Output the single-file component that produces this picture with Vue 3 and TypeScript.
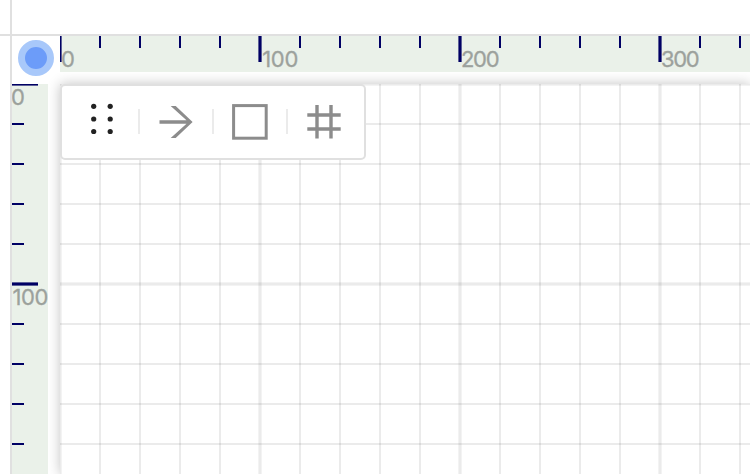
<script setup lang="ts">
const step = 40
const minorTicks = (length: number): number[] =>
  Array.from({ length: Math.ceil(length / step) }, (_, i) => i * step).filter((p) => p % 200 !== 0)
const majorTicks = (length: number): number[] =>
  Array.from({ length: Math.ceil(length / 200) }, (_, i) => i * 200)

const width = 690
const height = 390
</script>

<template>
  <div class="editor">
    <header class="header"></header>
    <aside class="side"></aside>
    <div class="corner"><span class="origin"></span></div>
    <svg class="ruler" :width="width" height="36">
      <rect v-for="x in minorTicks(width)" :key="x" :x="x - 1" y="0" width="2" height="12" class="tick" />
      <g v-for="x in majorTicks(width)" :key="'m' + x">
        <rect :x="x - 1.6" y="0" width="3.2" height="26" class="tick" />
        <text :x="x === 200 ? x + 2.2 : x + 1" y="31" class="label" :class="{ narrow: x === 200 }">{{ x / 2 }}</text>
      </g>
    </svg>
    <svg class="ruler vertical" width="36" :height="height">
      <rect v-for="y in minorTicks(height)" :key="y" x="0" :y="y - 1" width="12" height="2" class="tick" />
      <g v-for="y in majorTicks(height)" :key="'m' + y">
        <rect x="0" :y="y - 1.6" width="26" height="3.2" class="tick" />
        <text :x="y === 200 ? 0.4 : -1" :y="y + 21" class="label" :class="{ narrow: y === 200 }">{{ y / 2 }}</text>
      </g>
    </svg>
    <main class="canvas">
      <svg class="grid" :width="width" :height="height">
        <rect v-for="x in minorTicks(width)" :key="'x' + x" :x="x - 1" y="0" width="2" :height="height" class="line" />
        <rect v-for="x in majorTicks(width)" :key="'mx' + x" :x="x - 1.6" y="0" width="3.2" :height="height" class="line" />
        <rect v-for="y in minorTicks(height)" :key="'y' + y" x="0" :y="y - 1" :width="width" height="2" class="line" />
        <rect v-for="y in majorTicks(height)" :key="'my' + y" x="0" :y="y - 1.6" :width="width" height="3.2" class="line" />
      </svg>
      <nav class="toolbar">
        <svg class="tool" width="76" height="72" viewBox="0 0 76 72">
          <g v-for="y in [20.3, 33, 45.5]" :key="y" fill="#222">
            <circle cx="31.7" :cy="y" r="2.6" />
            <circle cx="48.2" :cy="y" r="2.6" />
          </g>
        </svg>
        <i class="divider"></i>
        <svg class="tool" width="72" height="72" viewBox="0 0 72 72">
          <path d="M19.5 34.3H46.5L30.7 20H35.7L52.6 36L35.7 52H30.7L46.5 37.7H19.5Z" fill="#8c8c8c" />
        </svg>
        <i class="divider"></i>
        <svg class="tool" width="72" height="72" viewBox="0 0 72 72">
          <rect x="19.6" y="19.6" width="32.6" height="32.6" fill="none" stroke="#8c8c8c" stroke-width="3" />
        </svg>
        <i class="divider"></i>
        <svg class="tool" width="76" height="72" viewBox="0 0 76 72">
          <path d="M29 19V52.5M43 19V52.5M19.3 29H52.7M19.3 43H52.7" stroke="#8c8c8c" stroke-width="3.4" />
        </svg>
      </nav>
    </main>
  </div>
</template>

<style>
body {
  overflow: hidden;
}
</style>

<style scoped>
.editor {
  display: grid;
  grid-template-columns: 12px 36px 12px 690px;
  grid-template-rows: 36px 36px 12px 390px;
  width: 750px;
  height: 474px;
  overflow: hidden;
  background: #fff;
  font-family: Inter, "Liberation Sans", sans-serif;
}
.header {
  grid-area: 1 / 1 / 2 / 5;
  border-bottom: 2px solid #e0e0e0;
}
.side {
  grid-area: 1 / 1 / 5 / 2;
  border-right: 2px solid #e0e0e0;
}
.corner {
  grid-area: 2 / 2 / 4 / 4;
  display: flex;
  align-items: flex-start;
  padding: 4px 0 0 6px;
}
.origin {
  box-sizing: border-box;
  width: 36px;
  height: 36px;
  border: 7px solid #a8c8fa;
  border-radius: 50%;
  background: #6c9cf9;
}
.ruler {
  grid-area: 2 / 4 / 3 / 5;
  display: block;
  overflow: hidden;
  background: #eaf1e9;
  z-index: 1;
}
.vertical {
  grid-area: 4 / 2 / 5 / 3;
}
.tick {
  fill: #000064;
}
.label {
  fill: #9ca19c;
  stroke: #9ca19c;
  stroke-width: 0.3px;
  font-size: 22px;
  letter-spacing: -1.3px;
}
.narrow {
  letter-spacing: -0.3px;
}
.canvas {
  grid-area: 4 / 4 / 5 / 5;
  position: relative;
  background: #fff;
  box-shadow: 0 0 12px rgba(0, 0, 0, 0.24);
}
.grid {
  display: block;
}
.line {
  fill: rgba(0, 0, 0, 0.08);
}
.toolbar {
  position: absolute;
  top: 0;
  left: 0;
  box-sizing: border-box;
  display: flex;
  align-items: center;
  width: 306px;
  height: 76px;
  border: 2px solid #e0e0e0;
  border-radius: 5px;
  background: #fff;
}
.tool {
  display: block;
  flex: none;
}
.divider {
  flex: none;
  width: 2px;
  height: 25px;
  margin-top: -2px;
  background: #ebebeb;
}
</style>
